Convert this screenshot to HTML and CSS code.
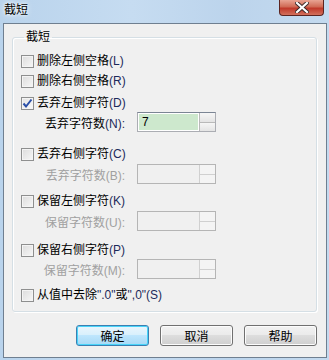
FILE: index.html
```html
<!DOCTYPE html>
<html lang="zh">
<head>
  <meta charset="UTF-8">
  <title>截短</title>
  <link rel="stylesheet" href="styles.css">
</head>
<body>

  <div class="titlebar">
    <span class="title">截短</span>
    <div class="close-btn">
      <svg width="14" height="11" viewBox="0 0 14 11">
        <path d="M2 1 L12 10 M12 1 L2 10" stroke="#3a2a2a" stroke-width="4" stroke-linecap="square"/>
        <path d="M2 1 L12 10 M12 1 L2 10" stroke="#fff" stroke-width="2.2" stroke-linecap="square"/>
      </svg>
    </div>
  </div>

  <div class="client">
    <fieldset class="group">
      <legend>截短</legend>

      <div class="row r1">
        <span class="check"></span>
        <span class="text">删除左侧空格<span class="key">(L)</span></span>
      </div>
      <div class="row r2">
        <span class="check"></span>
        <span class="text">删除右侧空格<span class="key">(R)</span></span>
      </div>
      <div class="row r3">
        <span class="check checked">
          <svg width="11" height="11" viewBox="0 0 11 11"><path d="M1.5 5.5 L4 8.5 L9.5 1.5" fill="none" stroke="#2a4fa8" stroke-width="2"/></svg>
        </span>
        <span class="text">丢弃左侧字符<span class="key">(D)</span></span>
      </div>
      <div class="row sub s1">
        <span class="sub-label">丢弃字符数<span class="key">(N):</span></span>
        <div class="spin">
          <div class="field active">7</div>
          <div class="arrows"><span class="up"></span><span class="down"></span></div>
        </div>
      </div>

      <div class="row r4">
        <span class="check"></span>
        <span class="text">丢弃右侧字符<span class="key">(C)</span></span>
      </div>
      <div class="row sub s2 disabled">
        <span class="sub-label">丢弃字符数(B):</span>
        <div class="spin">
          <div class="field"></div>
          <div class="arrows"><span class="up"></span><span class="down"></span></div>
        </div>
      </div>

      <div class="row r5">
        <span class="check"></span>
        <span class="text">保留左侧字符<span class="key">(K)</span></span>
      </div>
      <div class="row sub s3 disabled">
        <span class="sub-label">保留字符数(U):</span>
        <div class="spin">
          <div class="field"></div>
          <div class="arrows"><span class="up"></span><span class="down"></span></div>
        </div>
      </div>

      <div class="row r6">
        <span class="check"></span>
        <span class="text">保留右侧字符<span class="key">(P)</span></span>
      </div>
      <div class="row sub s4 disabled">
        <span class="sub-label">保留字符数(M):</span>
        <div class="spin">
          <div class="field"></div>
          <div class="arrows"><span class="up"></span><span class="down"></span></div>
        </div>
      </div>

      <div class="row r7">
        <span class="check"></span>
        <span class="text">从值中去除<span class="key">".0"</span>或<span class="key">",0"(S)</span></span>
      </div>
    </fieldset>

    <div class="buttons">
      <button class="button default">确定</button>
      <button class="button">取消</button>
      <button class="button">帮助</button>
    </div>
  </div>

</body>
</html>
```

FILE: styles.css
```css
html, body {
  margin: 0;
  padding: 0;
}
body {
  width: 329px;
  height: 360px;
  overflow: hidden;
  font-family: "Liberation Sans", "Noto Sans CJK SC", sans-serif;
  font-size: 12px;
  color: #000;
  background: linear-gradient(to right, #b9d3ec, #c6dcf1 40%, #bcd4ec 70%, #c4daef);
}
.titlebar {
  height: 23px;
  display: flex;
  align-items: flex-start;
  padding-left: 4px;
}
.title {
  margin-top: 3px;
  line-height: 14px;
  text-shadow: 0 0 6px #fff, 0 0 3px #fff;
}
.close-btn {
  margin-left: auto;
  margin-right: 5px;
  width: 43px;
  height: 15px;
  border: 1px solid #5c2420;
  border-top: none;
  border-radius: 0 0 4px 4px;
  background: linear-gradient(#e8a493, #d06a55 45%, #c0392a 55%, #d2705c);
  display: flex;
  align-items: center;
  justify-content: center;
}
.client {
  margin: 0 2px 0 3px;
  border: 1px solid #6f7f90;
  background: #f0f0f0;
  box-sizing: border-box;
  height: 335px;
  padding-top: 5px;
}
.group {
  margin: 0 9px 0 8px;
  padding: 6px 0 0 8px;
  height: 283px;
  box-sizing: border-box;
  border: 1px solid #d5dfe5;
  border-radius: 3px;
  box-shadow: inset 1px 1px 0 #fff, 1px 1px 0 #fff;
}
.group legend {
  padding: 0 2px;
  margin-left: 3px;
  line-height: 16px;
}
.row {
  display: flex;
  align-items: center;
  height: 20px;
}
.r2 { margin-top: 0; }
.r3 { margin-top: 2px; }
.s1 { margin-top: -1px; }
.r4 { margin-top: 12px; }
.s2 { margin-top: 0; }
.r5 { margin-top: 7px; }
.s3 { margin-top: 0; }
.r6 { margin-top: 9px; }
.s4 { margin-top: -1px; }
.r7 { margin-top: 6px; }
.check {
  width: 11px;
  height: 11px;
  border: 1px solid #8e8f8f;
  background: linear-gradient(135deg, #dcdcdc, #f7f7f7);
  box-shadow: inset 0 0 0 1px #f4f4f4;
  display: flex;
  align-items: center;
  justify-content: center;
  flex-shrink: 0;
}
.check.checked {
  background: linear-gradient(135deg, #e3e3e3, #fafafa);
}
.text {
  margin-left: 3px;
  line-height: 14px;
}
.key {
  color: #1c2a5a;
}
.sub-label {
  width: 104px;
  text-align: right;
}
.disabled .sub-label {
  color: #a0a0a0;
}
.spin {
  margin-left: 12px;
  width: 79px;
  height: 20px;
  box-sizing: border-box;
  display: flex;
  border: 1px solid #abadb3;
  border-top-color: #7b8594;
  background: #fff;
}
.field {
  flex: 1;
  margin: 1px;
  line-height: 16px;
  padding-left: 3px;
}
.field.active {
  background: #cde8cd;
}
.disabled .spin {
  border-color: #b5b5b5;
  background: #f0f0f0;
}
.arrows {
  width: 16px;
  display: flex;
  flex-direction: column;
}
.arrows span {
  flex: 1;
  border: 1px solid #b9b9b9;
  border-right: none;
  background: linear-gradient(#f6f6f6, #e4e4e4);
}
.arrows .up {
  border-bottom: none;
  border-top: none;
}
.arrows .down {
  border-bottom: none;
}
.disabled .arrows span {
  border-color: #d0d0d0;
  background: #f4f4f4;
}
.buttons {
  display: flex;
  justify-content: flex-end;
  gap: 11px;
  margin-top: 13px;
  padding-right: 9px;
}
.button {
  width: 73px;
  height: 21px;
  padding: 0;
  font-family: inherit;
  font-size: 12px;
  color: #000;
  border: 1px solid #707070;
  border-radius: 3px;
  background: linear-gradient(#f2f2f2, #ebebeb 45%, #dddddd 50%, #cfcfcf);
  box-shadow: inset 0 0 0 1px #fcfcfc;
}
.button.default {
  border-color: #3c7fb1;
  background: linear-gradient(#eaf6fd, #d9f0fc 45%, #bee6fd 50%, #a7d9f5);
  box-shadow: inset 0 0 0 1px #48d4f9;
}
```
